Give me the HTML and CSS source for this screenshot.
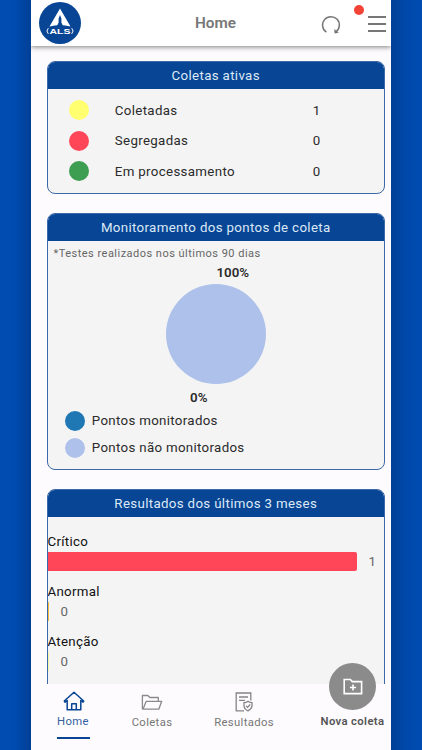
FILE: index.html
```html
<!DOCTYPE html>
<html lang="pt-BR">
<head>
  <meta charset="UTF-8">
  <meta name="viewport" content="width=device-width, initial-scale=1.0">
  <title>Home</title>
  <link rel="stylesheet" href="styles.css">
</head>
<body>
  <div class="phone">
    <header class="topbar">
      <div class="logo">
        <svg width="42" height="42" viewBox="0 0 42 42">
          <path d="M21 6.5 L31.5 24.6 Q21 21.5 10.5 24.6 Z" fill="#fff"/>
          <path d="M21 13 L22.4 16.5 V20.5 L24.5 25 H17.5 L19.6 20.5 V16.5 Z" fill="#084594"/>
          <path d="M9.3 31.8 Q6.5 29 9.3 26.2 M32.7 31.8 Q35.5 29 32.7 26.2" fill="none" stroke="#fff" stroke-width="1"/>
          <text class="logo-text" x="21" y="31.6" text-anchor="middle" textLength="21" lengthAdjust="spacingAndGlyphs">ALS</text>
        </svg>
      </div>
      <h1>Home</h1>
      <button class="refresh">
        <svg width="22" height="22" viewBox="0 0 22 22" fill="none" stroke="#777" stroke-width="1.5">
          <path d="M6.4 18.1 A8.4 8.4 0 1 1 15.8 17.9"/>
          <path d="M14.2 15 L14.6 19.6 L18.8 18.8 Z" fill="#777" stroke="none"/>
        </svg>
      </button>
      <button class="menu">
        <span></span><span></span><span></span>
        <i class="dot-alert"></i>
      </button>
    </header>

    <main class="content">
      <section class="card">
        <h2>Coletas ativas</h2>
        <ul class="samples">
          <li><i class="dot yellow"></i><span>Coletadas</span><b>1</b></li>
          <li><i class="dot red"></i><span>Segregadas</span><b>0</b></li>
          <li><i class="dot green"></i><span>Em processamento</span><b>0</b></li>
        </ul>
      </section>

      <section class="card">
        <h2>Monitoramento dos pontos de coleta</h2>
        <p class="note">*Testes realizados nos últimos 90 dias</p>
        <div class="chart">
          <span class="pct top">100%</span>
          <div class="pie"></div>
          <span class="pct bottom">0%</span>
        </div>
        <ul class="legend">
          <li><i class="dot blue"></i>Pontos monitorados</li>
          <li><i class="dot light"></i>Pontos não monitorados</li>
        </ul>
      </section>

      <section class="card results">
        <h2>Resultados dos últimos 3 meses</h2>
        <div class="bars">
          <div class="bar-group">
            <h3>Crítico</h3>
            <div class="bar-row"><div class="bar critical"></div><span>1</span></div>
          </div>
          <div class="bar-group">
            <h3>Anormal</h3>
            <div class="bar-row"><div class="bar abnormal"></div><span>0</span></div>
          </div>
          <div class="bar-group">
            <h3>Atenção</h3>
            <div class="bar-row"><div class="bar attention"></div><span>0</span></div>
          </div>
        </div>
      </section>
    </main>

    <nav class="tabs">
      <a class="tab home active">
        <svg width="22" height="20" viewBox="0 0 22 20" fill="none" stroke="#084594" stroke-width="1.5" stroke-linejoin="round">
          <path d="M4.2 9.5 L2 11.2 L1.3 10 L11 1.2 L20.7 10 L20 11.2 L17.8 9.5 V18.7 H4.2 Z"/>
          <path d="M8.7 18.5 V12.8 H13.3 V18.5"/>
        </svg>
        <span>Home</span>
      </a>
      <a class="tab coletas">
        <svg width="22" height="17" viewBox="0 0 22 17" fill="none" stroke="#8a8a8a" stroke-width="1.3" stroke-linejoin="round">
          <path d="M2 15.2 L1.4 14.5 V1.5 H6.8 L8.8 3.5 H17.3 V7.3"/>
          <path d="M2 15.2 L5.2 7.3 H20.7 L17.8 15.2 Z"/>
        </svg>
        <span>Coletas</span>
      </a>
      <a class="tab resultados">
        <svg width="18" height="20" viewBox="0 0 18 20" fill="none" stroke="#858585" stroke-width="1.3">
          <path d="M9 18.8 H1.2 V1 H15.8 V8.4"/>
          <path d="M4 5 H13 M4 8.3 H10"/>
          <path d="M13 9.2 Q14.8 10.6 17 10.7 V14 Q16.6 17.2 13 18.8 Q9.3 17.2 9 14 V10.7 Q11.2 10.6 13 9.2 Z"/>
          <path d="M11 13.9 L12.5 15.4 L15.2 12.5"/>
        </svg>
        <span>Resultados</span>
      </a>
      <a class="tab nova">
        <div class="fab">
          <svg width="20" height="17" viewBox="0 0 20 17" fill="none" stroke="#fff" stroke-width="1.6">
            <path d="M1.2 1.5 H7.4 L9.3 3.6 H18.6 V15.6 H1.2 Z"/>
            <path d="M10 6.5 V12.5 M7 9.5 H13"/>
          </svg>
        </div>
        <span>Nova coleta</span>
      </a>
    </nav>
  </div>
</body>
</html>
```

FILE: styles.css
```css
* {
  box-sizing: border-box;
}

body {
  margin: 0;
  padding: 0 31px;
  height: 750px;
  overflow: hidden;
  font-family: Roboto, sans-serif;
  background: linear-gradient(90deg, #004cb0 0, #004bb0 14px, #003f96 31px, #003f96 391px, #0048a9 405px, #004cb0 422px);
}

h1, h2, h3, p, ul {
  margin: 0;
  padding: 0;
  font-weight: 400;
}

ul {
  list-style: none;
}

button {
  padding: 0;
  border: none;
  background: none;
}

svg {
  display: block;
}

.phone {
  display: flex;
  flex-direction: column;
  width: 360px;
  height: 750px;
  background: #fdfbfe;
}

/* header */
.topbar {
  display: grid;
  grid-template-columns: 42px 1fr 22px 18px;
  flex: none;
  height: 46px;
  padding: 0 5px 0 8px;
  background: #fff;
  box-shadow: 0 1px 5px rgba(0, 0, 0, 0.5);
  clip-path: inset(0 0 -10px 0);
  z-index: 1;
}

.logo {
  width: 42px;
  height: 42px;
  margin-top: 2px;
  border-radius: 50%;
  background: #084594;
}

.logo-text {
  font-family: "Liberation Sans", sans-serif;
  font-size: 8px;
  font-weight: 700;
  fill: #fff;
}

.topbar h1 {
  padding: 12px 0 0 114px;
  color: #777;
  font-size: 15.3px;
  font-weight: 600;
  line-height: 23px;
}

.refresh {
  height: 22px;
  margin: 14px 0 0 -26px;
}

.menu {
  position: relative;
  display: flex;
  flex-direction: column;
  gap: 5.5px;
  height: 18px;
  margin-top: 16px;
}

.menu span {
  width: 18px;
  height: 1.5px;
  background: #777;
}

.dot-alert {
  position: absolute;
  top: -11px;
  left: -14px;
  width: 10px;
  height: 10px;
  border-radius: 50%;
  background: #f34336;
}

/* cards */
.content {
  display: flex;
  flex: 1;
  flex-direction: column;
  gap: 19px;
  min-height: 0;
  padding: 15px 6px 0 15.5px;
  overflow: hidden;
}

.card {
  flex: none;
  overflow: hidden;
  border: 1px solid #3b69aa;
  border-radius: 8px;
  background: #f4f4f4;
  color: #2b2b2b;
}

.card h2 {
  height: 27px;
  background: #084594;
  color: #dce9f7;
  font-size: 13.3px;
  letter-spacing: 0.34px;
  line-height: 28px;
  text-align: center;
}

.dot {
  width: 20px;
  height: 20px;
  border-radius: 50%;
}

.yellow { background: #ffff70; }
.red { background: #ff4558; }
.green { background: #3d9d50; }
.blue { background: #1f77b4; }
.light { background: #aec1eb; }

.samples {
  height: 104px;
  padding-top: 6px;
}

.samples li {
  display: grid;
  grid-template-columns: 46px 198px auto;
  align-items: center;
  height: 30.6px;
  padding-left: 21.3px;
  font-size: 13.3px;
  letter-spacing: 0.33px;
}

.samples b {
  font-weight: 400;
}

.note {
  padding-left: 6px;
  color: #666;
  font-size: 11px;
  letter-spacing: 0.48px;
  line-height: 25px;
}

.chart {
  display: flex;
  flex-direction: column;
  align-items: center;
  height: 140px;
}

.pct {
  font-size: 13.3px;
  font-weight: 600;
  line-height: 13px;
}

.pct.top {
  padding-left: 34px;
}

.pct.bottom {
  padding-right: 34px;
}

.pie {
  width: 100px;
  height: 100px;
  margin: 5px 0 7px;
  border-radius: 50%;
  background: #aec1eb;
}

.legend {
  height: 63px;
  padding: 1px 0 0 17.3px;
}

.legend li {
  display: flex;
  align-items: center;
  gap: 7px;
  height: 27px;
  font-size: 13.3px;
  letter-spacing: 0.32px;
}

.results {
  height: 330px;
}

.bars {
  padding-top: 16px;
}

.bar-group {
  height: 50px;
}

.bar-group h3 {
  color: #111;
  font-size: 13.3px;
  letter-spacing: 0.28px;
  line-height: 18px;
}

.bar-row {
  display: flex;
  align-items: center;
  gap: 12px;
  height: 20px;
  color: #666;
  font-size: 13.3px;
}

.bar {
  height: 19px;
  border-radius: 0 2px 2px 0;
}

.critical {
  width: 309px;
  background: #ff4558;
}

.abnormal {
  width: 1px;
  border-radius: 0;
  background: #f5bd3d;
}

.attention {
  width: 1px;
  border-radius: 0;
  background: #f6f6a0;
}

/* bottom tabs */
.tabs {
  display: grid;
  grid-template-columns: 85px 72px 112px 105px;
  flex: none;
  height: 66px;
  background: #fdfbfe;
  z-index: 1;
}

.tab {
  display: flex;
  flex-direction: column;
  align-items: center;
  color: #777;
  font-size: 11.3px;
  letter-spacing: 0.35px;
  line-height: 14px;
  white-space: nowrap;
}

.home {
  padding-top: 7px;
}

.home span {
  width: 33px;
  height: 25px;
  margin-top: 3px;
  border-bottom: 2px solid #084594;
  color: #33629f;
  line-height: 15px;
}

.coletas {
  padding-top: 10px;
}

.coletas span {
  margin-top: 5px;
}

.resultados {
  padding-top: 8px;
}

.resultados span {
  margin-top: 4px;
}

.nova {
  color: #555;
  font-weight: 600;
}

.fab {
  display: flex;
  flex: none;
  align-items: center;
  justify-content: center;
  width: 47px;
  height: 47px;
  margin: -21px 0 5px;
  border-radius: 50%;
  background: #8b8b8b;
}
```
